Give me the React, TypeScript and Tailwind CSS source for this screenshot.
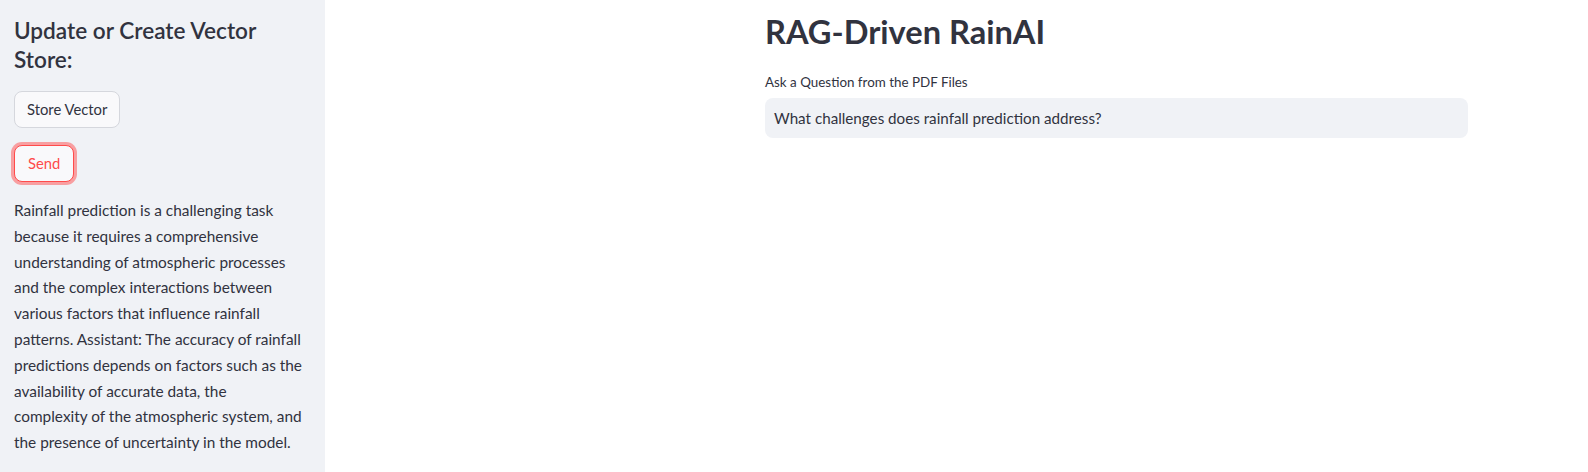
const answerLines = [
  'Rainfall prediction is a challenging task',
  'because it requires a comprehensive',
  'understanding of atmospheric processes',
  'and the complex interactions between',
  'various factors that influence rainfall',
  'patterns. Assistant: The accuracy of rainfall',
  'predictions depends on factors such as the',
  'availability of accurate data, the',
  'complexity of the atmospheric system, and',
  'the presence of uncertainty in the model.',
]

export default function App() {
  return (
    <div
      className="flex h-[472px] w-full overflow-hidden bg-white text-[#31333f]"
      style={{ fontFamily: 'Lato, "Noto Sans", sans-serif' }}
    >
      <aside className="flex w-[325px] shrink-0 flex-col bg-[#f0f2f6] px-[14px] pt-[16px]">
        <h2 className="text-[22.6px] font-semibold leading-[29px]">Update or Create Vector Store:</h2>
        <button className="mt-[17px] h-[37px] w-fit rounded-[8px] border border-[#d5d7dd] bg-[#f9f9fb] px-[12px] text-[14.8px]">
          Store Vector
        </button>
        <button className="mt-[17px] h-[37px] w-fit rounded-[8px] border border-[#ff4b4b] bg-[#f9f9fb] px-[13px] text-[14.8px] text-[#ff4b4b] shadow-[0_0_0_3px_rgba(255,75,75,0.5)]">
          Send
        </button>
        <p className="mt-[16px] text-[15.4px] leading-[25.8px]">
          {answerLines.map((line) => (
            <span key={line} className="block whitespace-nowrap">
              {line}
            </span>
          ))}
        </p>
      </aside>
      <main className="flex-1">
        <div className="ml-[440px] w-[703px] pt-[10px]">
          <h1 className="text-[32.6px] font-bold leading-[44px]">RAG-Driven RainAI</h1>
          <label className="mt-[18px] block text-[13.4px] leading-[20px]">Ask a Question from the PDF Files</label>
          <div className="mt-[6px] flex h-[40px] items-center rounded-[8px] bg-[#f0f2f6] px-[9px] text-[15.2px]">
            What challenges does rainfall prediction address?
          </div>
        </div>
      </main>
    </div>
  )
}
